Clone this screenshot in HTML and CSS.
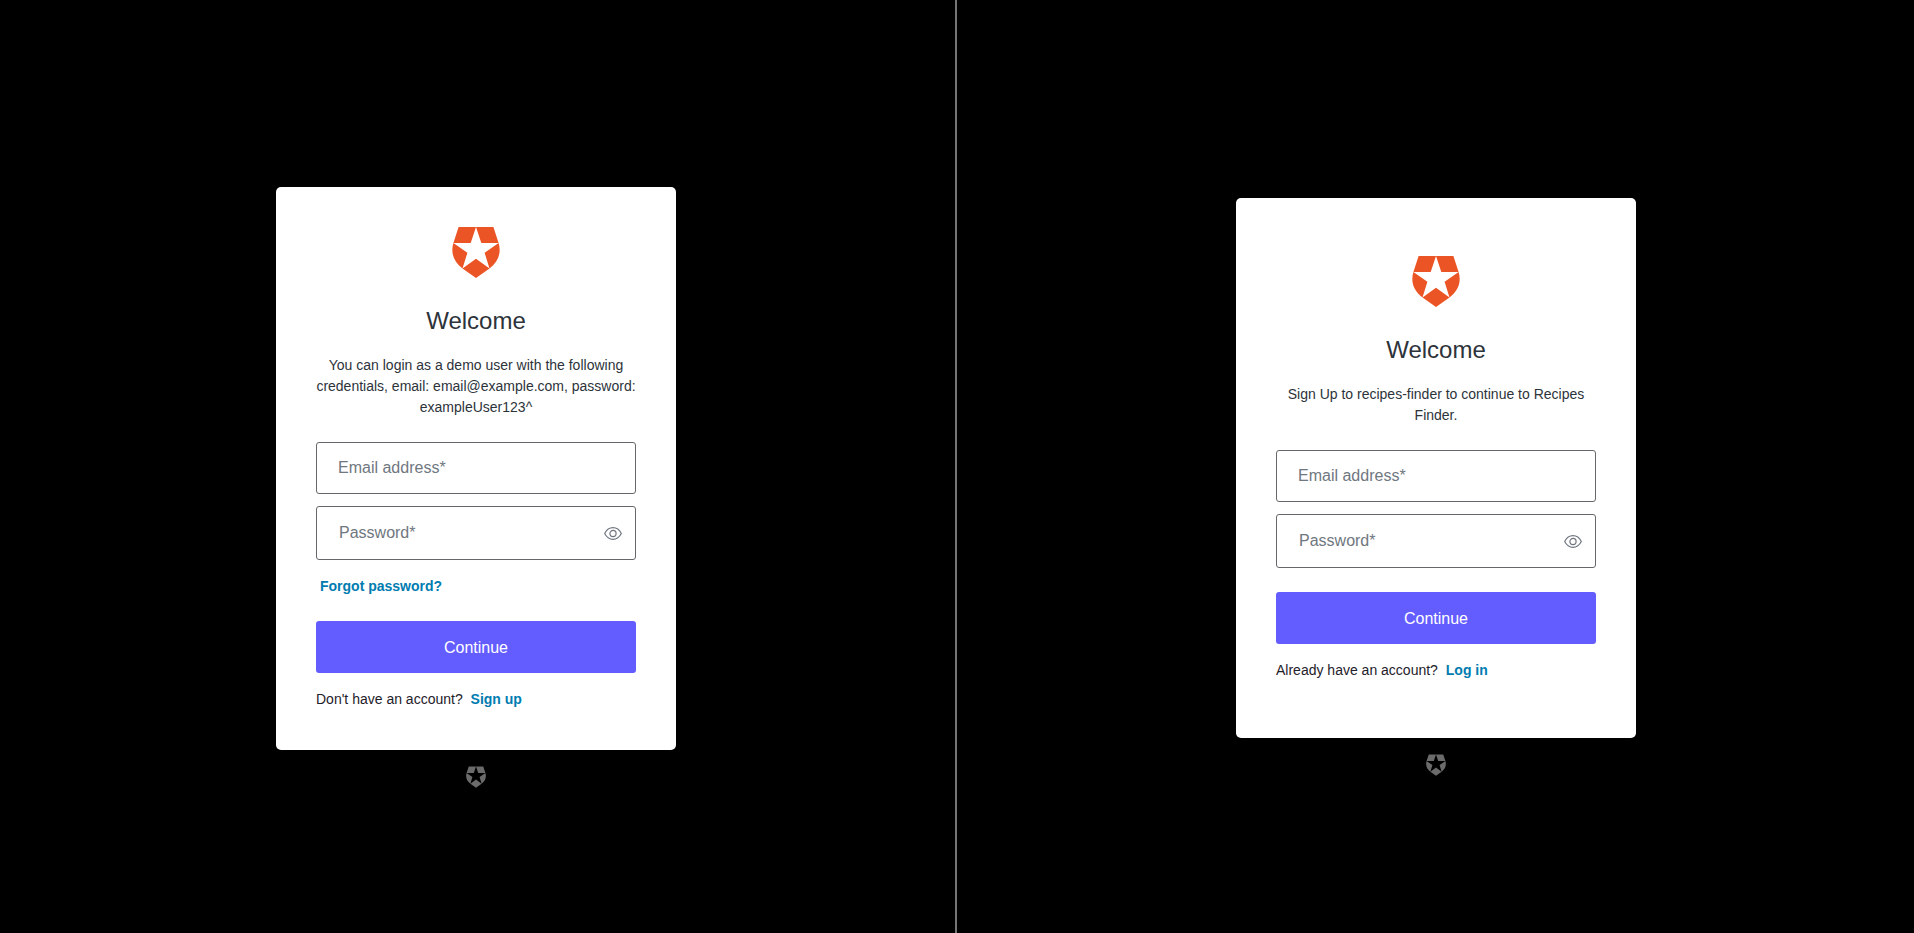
FILE: index.html
```html
<!DOCTYPE html>
<html lang="en">
<head>
  <meta charset="utf-8">
  <title>Recipes Finder – Log in or sign up</title>
  <link rel="stylesheet" href="styles.css">
</head>
<body>
  <svg class="symbols" aria-hidden="true">
    <symbol id="shield" viewBox="0 0 48 51">
      <path fill="currentColor" fill-rule="evenodd" d="M6.6 0H41.4L46.6 16C49.6 26 46.2 35 37.5 41.4L24 51L10.5 41.4C1.8 35 -1.6 26 1.4 16ZM24 0L18.7 16H1.4L15.4 25.8L10.5 41.4L24 31.7L37.5 41.4L32.6 25.8L46.6 16H29.3Z"/>
    </symbol>
    <symbol id="eye" viewBox="0 0 18 13">
      <g fill="none" stroke="currentColor" stroke-width="1.2">
        <path d="M0.7 6.5C2.6 2.7 5.5 0.7 9 0.7S15.4 2.7 17.3 6.5C15.4 10.3 12.5 12.3 9 12.3S2.6 10.3 0.7 6.5Z"/>
        <circle cx="9" cy="6.5" r="3.1"/>
      </g>
    </symbol>
  </svg>

  <main class="screens">
    <section class="screen screen-login">
      <div class="card">
        <svg class="logo" role="img" aria-label="Logo"><use href="#shield"/></svg>
        <h1 class="title">Welcome</h1>
        <p class="description">You can login as a demo user with the following credentials, email: email@example.com, password: exampleUser123^</p>
        <form class="form">
          <input class="field" type="email" placeholder="Email address*" aria-label="Email address" required>
          <div class="password">
            <input class="password-input" type="password" placeholder="Password*" aria-label="Password" required>
            <button class="toggle" type="button" aria-label="Show password"><svg class="eye"><use href="#eye"/></svg></button>
          </div>
          <p class="forgot"><a class="link" href="#">Forgot password?</a></p>
          <button class="submit" type="submit">Continue</button>
        </form>
        <p class="alternate">Don't have an account? <a class="link" href="#">Sign up</a></p>
      </div>
      <svg class="badge" role="img" aria-label="Provider"><use href="#shield"/></svg>
    </section>

    <section class="screen screen-signup">
      <div class="card card-roomy">
        <svg class="logo" role="img" aria-label="Logo"><use href="#shield"/></svg>
        <h1 class="title">Welcome</h1>
        <p class="description">Sign Up to recipes-finder to continue to Recipes Finder.</p>
        <form class="form">
          <input class="field" type="email" placeholder="Email address*" aria-label="Email address" required>
          <div class="password">
            <input class="password-input" type="password" placeholder="Password*" aria-label="Password" required>
            <button class="toggle" type="button" aria-label="Show password"><svg class="eye"><use href="#eye"/></svg></button>
          </div>
          <button class="submit" type="submit">Continue</button>
        </form>
        <p class="alternate">Already have an account? <a class="link" href="#">Log in</a></p>
      </div>
      <svg class="badge" role="img" aria-label="Provider"><use href="#shield"/></svg>
    </section>
  </main>
</body>
</html>
```
FILE: styles.css
```css
* {
  box-sizing: border-box;
}

body {
  margin: 0;
  background: #000;
  color: #2d333a;
  font-family: "Liberation Sans", Arial, sans-serif;
  font-size: 14px;
  line-height: 21px;
}

.symbols {
  display: none;
}

.screens {
  display: grid;
  grid-template-columns: 1fr 1fr;
  min-height: 100vh;
}

.screen {
  display: flex;
  flex-direction: column;
  align-items: center;
  justify-content: center;
}

.screen-login {
  padding-top: 42px;
  padding-right: 3px;
  border-right: 2px solid #757575;
}

.screen-signup {
  padding-top: 41px;
  padding-left: 1px;
}

.card {
  display: flex;
  flex-direction: column;
  width: 400px;
  max-width: 100%;
  padding: 40px;
  border-radius: 5px;
  background: #fff;
}

.card-roomy {
  padding: 58px 40px 57px;
}

.logo {
  align-self: center;
  width: 48px;
  height: 51px;
  margin-bottom: 25px;
  color: #eb5424;
}

.title {
  margin: 0 0 16px;
  font-size: 24px;
  font-weight: 400;
  line-height: 36px;
  text-align: center;
}

.description {
  margin: 0 0 24px;
  text-align: center;
}

.form {
  display: flex;
  flex-direction: column;
}

.field,
.password {
  border: 1px solid #67676b;
  border-radius: 3px;
  background: #fff;
}

.field,
.password-input {
  height: 52px;
  padding: 0 21px;
  color: #2d333a;
  font: inherit;
  font-size: 16px;
}

.field {
  margin-bottom: 12px;
}

.password {
  display: flex;
}

.password-input {
  flex: 1;
  min-width: 0;
  border: 1px solid transparent;
  background: transparent;
}

.field::placeholder,
.password-input::placeholder {
  color: #6f7780;
  opacity: 1;
}

.toggle {
  display: flex;
  align-items: center;
  justify-content: center;
  width: 44px;
  padding: 0;
  border: 0;
  background: transparent;
  color: #6f7780;
}

.eye {
  width: 18px;
  height: 13px;
}

.forgot {
  margin: 16px 0 0;
}

.link {
  padding: 0 4px;
  color: #007cb0;
  font-weight: 700;
  text-decoration: none;
}

.submit {
  height: 52px;
  margin-top: 24px;
  border: 0;
  border-radius: 3px;
  background: #635dff;
  color: #fff;
  font: inherit;
  font-size: 16px;
}

.alternate {
  margin: 16px 0 0;
  color: #1e212a;
}

.badge {
  width: 20px;
  height: 22px;
  margin-top: 16px;
  color: #6b6b6b;
}
```
